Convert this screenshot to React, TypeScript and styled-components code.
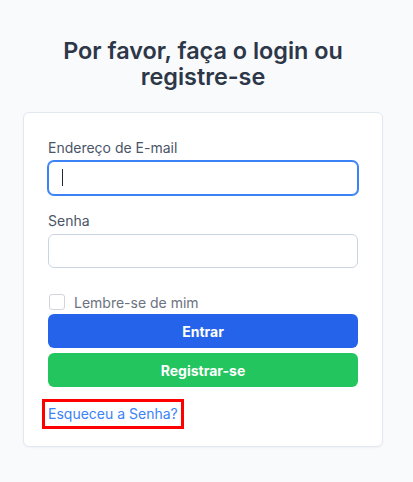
import React from "react";
import styled, { createGlobalStyle } from "styled-components";

const Global = createGlobalStyle`
  html, body { margin: 0; padding: 0; background: #f8fafc; }
  body { font-family: Inter, "Noto Sans", "Liberation Sans", sans-serif; -webkit-font-smoothing: antialiased; }
  * { box-sizing: border-box; }
`;

const Page = styled.main`
  min-height: 482px;
  padding: 38px 30px 0 23px;
  display: flex;
  flex-direction: column;
`;

const Title = styled.h1`
  margin: 0 0 22px;
  font-size: 23.4px;
  line-height: 26px;
  font-weight: 600;
  color: #2d3748;
  text-align: center;
`;

const Card = styled.form`
  width: 360px;
  background: #ffffff;
  border: 1px solid #e2e8f0;
  border-radius: 6px;
  box-shadow: 0 1px 2px rgba(15, 23, 42, 0.04);
  padding: 25px 24px 17px;
  display: flex;
  flex-direction: column;
`;

const Field = styled.div<{ $gap?: number }>`
  display: flex;
  flex-direction: column;
  margin-bottom: ${(p) => p.$gap ?? 16}px;
`;

const Label = styled.label`
  font-size: 14px;
  line-height: 20px;
  color: #4a5568;
  margin-bottom: 3px;
`;

const InputWrap = styled.div`
  position: relative;
`;

const Input = styled.input<{ $focused?: boolean }>`
  width: 100%;
  height: 34px;
  border: 1px solid ${(p) => (p.$focused ? "#3b82f6" : "#cbd5e1")};
  box-shadow: ${(p) => (p.$focused ? "0 0 0 1px #3b82f6" : "none")};
  border-radius: 6px;
  padding: 0 12px;
  font-size: 14px;
  font-family: inherit;
  outline: none;
  background: #fff;
  caret-color: transparent;
`;

const Caret = styled.span`
  position: absolute;
  left: 14px;
  top: 8px;
  width: 1px;
  height: 17px;
  background: #1f2937;
`;

const CheckRow = styled.label`
  display: flex;
  align-items: center;
  gap: 9px;
  height: 20px;
  margin-top: 24px;
  font-size: 14px;
  color: #6b7280;
`;

const Box = styled.span`
  width: 16px;
  height: 16px;
  border: 1px solid #d1d5db;
  border-radius: 3px;
  background: #fff;
  margin-left: 1px;
`;

const Button = styled.button<{ $color: string; $mt: number }>`
  height: 34px;
  width: 100%;
  border: 0;
  border-radius: 6px;
  background: ${(p) => p.$color};
  color: #fff;
  font-family: inherit;
  font-size: 14px;
  font-weight: 700;
  margin-top: ${(p) => p.$mt}px;
  cursor: pointer;
`;

const LinkRow = styled.div`
  margin-top: 12px;
  display: flex;
`;

const ForgotLink = styled.a`
  margin-left: -6px;
  padding: 2px 3px;
  border: 3px solid #ff0000;
  font-size: 14px;
  line-height: 20px;
  color: #3b82f6;
  text-decoration: none;
`;

export default function App() {
  return (
    <>
      <Global />
      <Page>
        <Title>Por favor, faça o login ou registre-se</Title>
        <Card onSubmit={(e) => e.preventDefault()}>
          <Field>
            <Label htmlFor="email">Endereço de E-mail</Label>
            <InputWrap>
              <Input id="email" type="email" $focused />
              <Caret />
            </InputWrap>
          </Field>
          <Field $gap={0}>
            <Label htmlFor="senha">Senha</Label>
            <Input id="senha" type="password" />
          </Field>
          <CheckRow>
            <Box />
            Lembre-se de mim
          </CheckRow>
          <Button $color="#2563eb" $mt={2} type="submit">Entrar</Button>
          <Button $color="#22c55e" $mt={5} type="button">Registrar-se</Button>
          <LinkRow>
            <ForgotLink href="#">Esqueceu a Senha?</ForgotLink>
          </LinkRow>
        </Card>
      </Page>
    </>
  );
}
